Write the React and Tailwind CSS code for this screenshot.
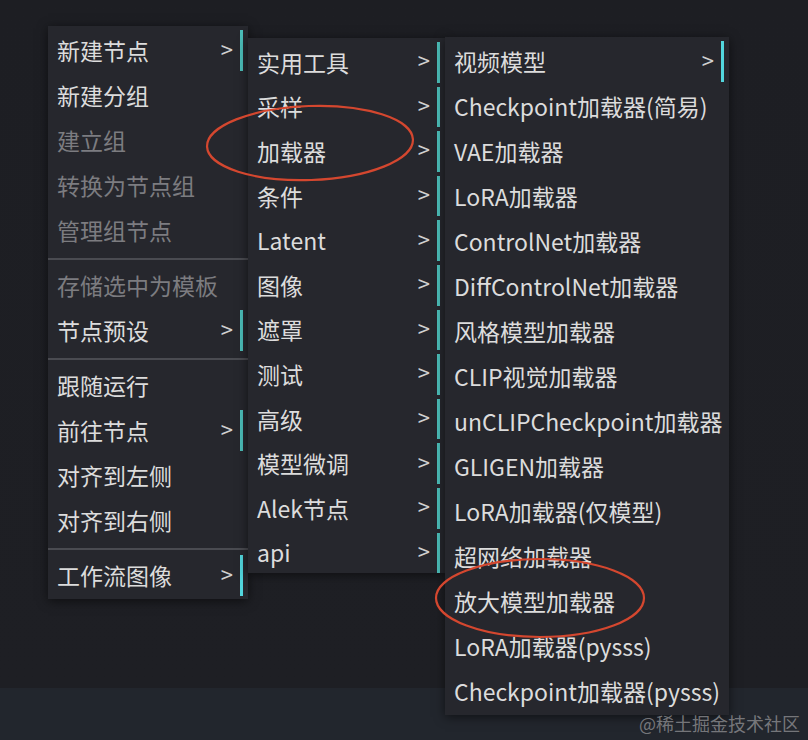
export default function App() {
  const mainMenu = [
    { label: "新建节点", sub: true },
    { label: "新建分组" },
    { label: "建立组", disabled: true },
    { label: "转换为节点组", disabled: true },
    { label: "管理组节点", disabled: true },
    { sep: true },
    { label: "存储选中为模板", disabled: true },
    { label: "节点预设", sub: true },
    { sep: true },
    { label: "跟随运行" },
    { label: "前往节点", sub: true },
    { label: "对齐到左侧" },
    { label: "对齐到右侧" },
    { sep: true },
    { label: "工作流图像", sub: true, bright: true },
  ]

  const categories = [
    "实用工具",
    "采样",
    "加载器",
    "条件",
    "Latent",
    "图像",
    "遮罩",
    "测试",
    "高级",
    "模型微调",
    "Alek节点",
    "api",
  ].map((label) => ({ label, sub: true }))

  const loaders = [
    { label: "视频模型", sub: true, bright: true },
    { label: "Checkpoint加载器(简易)" },
    { label: "VAE加载器" },
    { label: "LoRA加载器" },
    { label: "ControlNet加载器" },
    { label: "DiffControlNet加载器" },
    { label: "风格模型加载器" },
    { label: "CLIP视觉加载器" },
    { label: "unCLIPCheckpoint加载器" },
    { label: "GLIGEN加载器" },
    { label: "LoRA加载器(仅模型)" },
    { label: "超网络加载器" },
    { label: "放大模型加载器" },
    { label: "LoRA加载器(pysss)" },
    { label: "Checkpoint加载器(pysss)" },
  ]

  const renderItems = (items, rowH) =>
    items.map((item, i) =>
      item.sep ? (
        <div key={i} className="h-[10px] flex flex-col justify-end pb-[1px]">
          <div className="h-[2px] bg-[#4a4b51]" />
        </div>
      ) : (
        <div key={i} className={`flex items-center pl-[9px] pr-[5px] ${rowH}`}>
          <span className={`whitespace-nowrap mt-[4px] ${item.disabled ? "text-[#7c7c80]" : "text-[#dcdcdc]"}`}>{item.label}</span>
          {item.sub && (
            <>
              <span className="ml-auto text-[#d0d0d0] text-[22px] -mt-[2px]">&gt;</span>
              <span
                className={`ml-[7px] w-[3px] self-stretch mt-[4px] ${item.bright ? "bg-[#52d6dd]" : "bg-[#4bbdb8]"}`}
              />
            </>
          )}
        </div>
      )
    )

  return (
    <div className="relative w-[808px] h-[740px] overflow-hidden bg-[linear-gradient(to_bottom,#1d1e23_0px,#1e1f24_688px,#22262d_688px)] font-['Noto_Sans_CJK_SC','Noto_Sans',sans-serif] text-[23px] leading-none">
      {/* main context menu */}
      <div className="absolute left-[48px] top-[26px] w-[200px] pb-[3px] bg-[#26272d] shadow-[0_2px_10px_rgba(0,0,0,0.55)]">
        {renderItems(mainMenu, "h-[45px]")}
      </div>

      {/* node categories */}
      <div className="absolute left-[248px] top-[38px] w-[197px] bg-[#26272d] shadow-[0_2px_10px_rgba(0,0,0,0.55)]">
        {renderItems(categories, "h-[44.6px]")}
      </div>

      {/* loaders */}
      <div className="absolute left-[445px] top-[37px] w-[284px] pb-[3px] bg-[#26272d] shadow-[0_2px_10px_rgba(0,0,0,0.55)]">
        {renderItems(loaders, "h-[45px]")}
      </div>

      {/* annotation circles */}
      <svg className="absolute inset-0 pointer-events-none" width="808" height="740">
        <ellipse cx="310" cy="143" rx="103" ry="37" fill="none" stroke="#d4472f" strokeWidth="2.2" transform="rotate(-2 310 143)" />
        <ellipse cx="540" cy="598" rx="104" ry="39" fill="none" stroke="#d4472f" strokeWidth="2.2" />
      </svg>

      <div className="absolute right-[8px] bottom-[8px] text-[18px] text-[#8d8d90]/80">@稀土掘金技术社区</div>
    </div>
  )
}
